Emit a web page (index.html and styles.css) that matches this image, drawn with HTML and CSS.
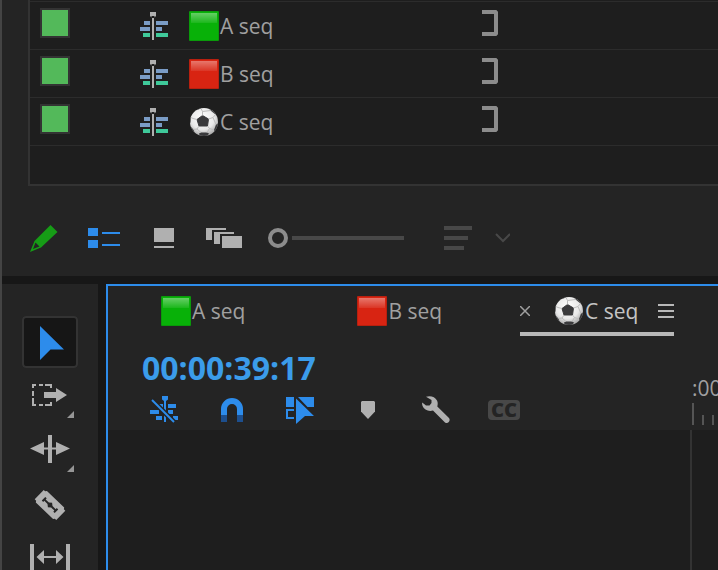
FILE: index.html
```html
<!DOCTYPE html>
<html lang="en">
<head>
    <meta charset="UTF-8">
    <meta name="viewport" content="width=device-width, initial-scale=1.0">
    <title>Sequences</title>
    <link rel="stylesheet" href="styles.css">
</head>
<body>
    <!-- shared icons -->
    <svg class="defs" width="0" height="0" aria-hidden="true">
        <defs>
            <linearGradient id="shine" x1="0" y1="0" x2="0" y2="1">
                <stop offset="0" stop-color="#fff" stop-opacity="0.38"/>
                <stop offset="1" stop-color="#fff" stop-opacity="0.08"/>
            </linearGradient>
            <radialGradient id="ballShade" cx="0.45" cy="0.35" r="0.65">
                <stop offset="0" stop-color="#fff"/>
                <stop offset="0.65" stop-color="#e8e8e8"/>
                <stop offset="1" stop-color="#a8a8a8"/>
            </radialGradient>
            <clipPath id="ballClip"><circle cx="15" cy="15" r="14"/></clipPath>
        </defs>
        <symbol id="green" viewBox="0 0 30 30">
            <rect width="30" height="30" rx="1" fill="#0a9a0a"/>
            <rect x="1" y="1" width="28" height="28" fill="#08b108"/>
            <rect x="2" y="2" width="26" height="10" fill="url(#shine)"/>
        </symbol>
        <symbol id="red" viewBox="0 0 30 30">
            <rect width="30" height="30" rx="1" fill="#b8200f"/>
            <rect x="1" y="1" width="28" height="28" fill="#d82412"/>
            <rect x="2" y="2" width="26" height="10" fill="url(#shine)"/>
        </symbol>
        <symbol id="ball" viewBox="0 0 30 30">
            <circle cx="15" cy="15" r="14" fill="url(#ballShade)"/>
            <g clip-path="url(#ballClip)">
                <path d="M13.500 8.500l6 3.500-1 7h-8.500L8 12.500z" fill="#3a3a3c" stroke="#3a3a3c" stroke-linejoin="round"/>
                <path d="M19 0l2.500 3.500L26.500 7.500 30 9V0zM30 16l-3 1.500-2 5.500 1.500 3L30 22zM10 26.500l2-1h6l2 1-2 3h-7zM0 9l2 1.500-.5 5L0 17zM2 20l2.500 2.500L6 27 2 26zM8 3l4-1.500V0H7z" fill="#3a3a3c"/>
                <path d="M13.500 8.500V4.500L12 1.500M13.500 4.500l8-1M19.500 12l4.500-1.500 2.500-3M18.500 19l2 2.500 4.500 1.500M20.500 21.500L18 25.500M10 19l-2 3 4 3.500M8 22l-3.500.5M8 12.500l-4-1-2-1M24 10.500l3 7" fill="none" stroke="#bcbcbc"/>
            </g>
        </symbol>
        <symbol id="seq" viewBox="0 0 28 28">
            <path d="M10 0h6v4l-1.500 1.500V4h-3v1.500L10 4z" fill="#b0b0b0"/>
            <path d="M12 6h2v22h-2z" fill="#b0b0b0"/>
            <path d="M4 9h6v4H4zM16 9h12v4H16zM0 15h10v4H0zM16 15h6v4h-6z" fill="#7a9cc6"/>
            <path d="M3 21h7v4H3zM16 21h12v4H16z" fill="#3fc99a"/>
        </symbol>
        <symbol id="bracket" viewBox="0 0 16 26">
            <path d="M0 2h13.500l.5.500v21l-.5.500H0" fill="none" stroke="#8c8c8c" stroke-width="4"/>
        </symbol>
    </svg>

    <div class="app">
        <section class="project">
            <table class="bin">
                <tbody>
                    <tr>
                        <td class="label"><span class="swatch"></span></td>
                        <td class="kind"><svg width="28" height="28"><use href="#seq"/></svg></td>
                        <td class="name"><span class="title"><svg width="30" height="30"><use href="#green"/></svg>A seq</span></td>
                        <td class="usage"><svg width="16" height="26"><use href="#bracket"/></svg></td>
                    </tr>
                    <tr>
                        <td class="label"><span class="swatch"></span></td>
                        <td class="kind"><svg width="28" height="28"><use href="#seq"/></svg></td>
                        <td class="name"><span class="title"><svg width="30" height="30"><use href="#red"/></svg>B seq</span></td>
                        <td class="usage"><svg width="16" height="26"><use href="#bracket"/></svg></td>
                    </tr>
                    <tr>
                        <td class="label"><span class="swatch"></span></td>
                        <td class="kind"><svg width="28" height="28"><use href="#seq"/></svg></td>
                        <td class="name"><span class="title"><svg width="30" height="30"><use href="#ball"/></svg>C seq</span></td>
                        <td class="usage"><svg width="16" height="26"><use href="#bracket"/></svg></td>
                    </tr>
                    <tr class="blank"><td colspan="4"></td></tr>
                </tbody>
            </table>

            <div class="toolbar">
                <button class="tool-button" aria-label="Write access">
                    <svg width="28" height="28" viewBox="0 0 28 28">
                        <path d="M20.500 1L27.500 8 11 23.500 0 28 4.500 17zM5.500 18.500L3 25l6.500-2.500z" fill="#169c16" fill-rule="evenodd"/>
                    </svg>
                </button>
                <button class="tool-button" aria-label="List view">
                    <svg width="32" height="20" viewBox="0 0 32 20" fill="#2d8ceb">
                        <path d="M0 0h10v8H0zM0 12h10v8H0zM14 4h18v2H14zM14 16h18v2H14z"/>
                    </svg>
                </button>
                <button class="tool-button" aria-label="Icon view">
                    <svg width="20" height="20" viewBox="0 0 20 20" fill="#b0b0b0">
                        <path d="M0 0h20v14H0zM0 18h20v2H0z"/>
                    </svg>
                </button>
                <button class="tool-button" aria-label="Freeform view">
                    <svg width="36" height="20" viewBox="0 0 36 20" fill="#b0b0b0">
                        <path d="M0 0h20v2H6v10H0zM8 4h20v2H14v10H8zM16 8h20v12H16z"/>
                    </svg>
                </button>
                <input class="zoom" type="range" min="0" max="100" value="0" aria-label="Zoom">
                <button class="sort" aria-label="Sort icons">
                    <svg width="66" height="24" viewBox="0 0 66 24" fill="#484848">
                        <path d="M0 0h28v4H0zM0 10h24v4H0zM0 20h20v4H0z"/>
                        <path d="M52 8l7 7 7-7" fill="none" stroke="#484848" stroke-width="2"/>
                    </svg>
                </button>
            </div>
        </section>

        <div class="workspace">
            <nav class="tools">
                <button class="tool selected" aria-label="Selection tool">
                    <svg width="56" height="52" viewBox="0 0 56 52">
                        <path d="M18 10l24 23.500H28.500L18 44z" fill="#2d8ceb"/>
                    </svg>
                </button>
                <button class="tool" aria-label="Track select tool">
                    <svg width="56" height="52" viewBox="0 0 56 52" fill="#b0b0b0">
                        <path d="M10 14h4v2h-2v2h-2zM17 14h4v2h-4zM23 14h7v4h-2v-2h-5zM10 21h2v5h-2zM10 28h2v5h-2zM10 32h2v2h2v2h-4zM17 34h4v2h-4zM23 34h5v-2h2v4h-7z"/>
                        <path d="M22 22h12v-4l11 7-11 7v-4H22z"/>
                        <path d="M52 41v7h-7z" fill="#969696"/>
                    </svg>
                </button>
                <button class="tool" aria-label="Ripple edit tool">
                    <svg width="56" height="52" viewBox="0 0 56 52" fill="#b0b0b0">
                        <path d="M26 11h4v28h-4zM8 24.500L22 18v5.500h4v2h-4V31zM48 24.500L34 18v5.500h-4v2h4V31z"/>
                        <path d="M52 41v7h-7z" fill="#969696"/>
                    </svg>
                </button>
                <button class="tool" aria-label="Razor tool">
                    <svg width="56" height="52" viewBox="0 0 56 52">
                        <g transform="rotate(44 28 27)">
                            <path d="M13 20.500h2l1-1.500h24l1 1.500h2v13h-2L40 35H16l-1-1.500h-2z" fill="#b0b0b0"/>
                            <path d="M19 24.500h2V26h4.500l2.500-2 2.500 2H35v-1.500h2v5h-2V28h-4.500L28 30l-2.500-2H21v1.500h-2z" fill="#242424"/>
                        </g>
                    </svg>
                </button>
                <button class="tool" aria-label="Slip tool">
                    <svg width="56" height="52" viewBox="0 0 56 52" fill="#b0b0b0">
                        <path d="M8 12h4v28H8zM44 12h4v28h-4zM14.500 25L22 18v6h12v-6l7.500 7-7.500 7v-6H22v6z"/>
                    </svg>
                </button>
            </nav>

            <section class="timeline">
                <div class="tabs">
                    <div class="tab"><button class="title"><svg width="30" height="30"><use href="#green"/></svg>A seq</button></div>
                    <div class="tab"><button class="title"><svg width="30" height="30"><use href="#red"/></svg>B seq</button></div>
                    <div class="tab active">
                        <button class="close" aria-label="Close">
                            <svg width="10" height="10" viewBox="0 0 10 10"><path d="M0 0l10 10M10 0L0 10" stroke="#a0a0a0" stroke-width="1.500"/></svg>
                        </button>
                        <button class="title"><svg width="30" height="30"><use href="#ball"/></svg>C seq</button>
                        <button class="menu" aria-label="Panel menu">
                            <svg width="16" height="14" viewBox="0 0 16 14"><path d="M0 1h16M0 7h16M0 13h16" stroke="#b8b8b8" stroke-width="2"/></svg>
                        </button>
                    </div>
                </div>

                <div class="head">
                    <div class="controls">
                        <div class="timecode">00:00:39:17</div>
                        <div class="switches">
                            <button class="switch" aria-label="Nest sequences">
                                <svg width="28" height="28" viewBox="0 0 28 28" fill="#2d8ceb">
                                    <path d="M12 0h6v3.500L16 5v21h-2V5l-2-1.500zM18 8h8v4h-8zM9 8h4v4H9zM0 14h9v4H0zM18 14h5v4h-5zM6 20h6v4H6zM23 20h5v4h-5z"/>
                                    <path d="M2 4l22 22" stroke="#242424" stroke-width="5"/>
                                    <path d="M2 4l22 22" stroke="#2d8ceb" stroke-width="2"/>
                                </svg>
                            </button>
                            <button class="switch" aria-label="Snap">
                                <svg width="22" height="24" viewBox="0 0 22 24" fill="#2d8ceb">
                                    <path d="M0 17v-6a11 11 0 0 1 22 0v6h-6v-6a5 5 0 0 0-10 0v6z"/>
                                    <path d="M0 17h6v7H0zM16 17h6v7h-6z" fill="#1d4f8e"/>
                                </svg>
                            </button>
                            <button class="switch" aria-label="Linked selection">
                                <svg width="28" height="28" viewBox="0 0 28 28" fill="#2d8ceb">
                                    <path d="M0 1h8v10H0zM12 1h16v10h-6.500zM0 13h8v2H2v6h6v2H0zM10 2.500L28 20h-9L10 28z"/>
                                </svg>
                            </button>
                            <button class="switch" aria-label="Add marker">
                                <svg width="14" height="18" viewBox="0 0 14 18"><path d="M1 0h12l1 1v9.500L7 18 0 10.500V1z" fill="#b0b0b0"/></svg>
                            </button>
                            <button class="switch" aria-label="Display settings">
                                <svg width="28" height="28" viewBox="0 0 28 28">
                                    <path d="M4 .8C8-.8 13 .5 15 4.500c1 2 .8 4 .3 6L27 22c2 2.500-1 6.500-4 4.500L11 14.500C6.500 16 2 13.500.6 10c-.5-1.500-.6-2.500-.4-3.500L4 9.500h3.500L9.500 7V4z" fill="#b0b0b0"/>
                                </svg>
                            </button>
                            <button class="switch" aria-label="Captions"><span class="cc">CC</span></button>
                        </div>
                    </div>
                    <div class="ruler">
                        <span class="time">:00:00</span>
                        <div class="ticks">
                            <i class="tick major"></i><i class="tick"></i><i class="tick"></i>
                        </div>
                    </div>
                </div>

                <div class="tracks">
                    <div class="track-heads"></div>
                    <div class="track-area"></div>
                </div>
            </section>
        </div>
    </div>
</body>
</html>
```
FILE: styles.css
```css
* {
    box-sizing: border-box;
}

body {
    margin: 0;
    background: #171717;
    color: #a0a0a0;
    font-family: "Open Sans", "Noto Sans", sans-serif;
    font-size: 21px;
    line-height: 30px;
}

button {
    padding: 0;
    border: 0;
    background: none;
    color: inherit;
    font: inherit;
    cursor: pointer;
}

svg {
    display: block;
}

.defs {
    position: absolute;
}

.app {
    display: flex;
    flex-direction: column;
    gap: 8px;
    height: 100vh;
    overflow: hidden;
    border-left: 2px solid #444;
}

/* project panel */
.project {
    flex: none;
    padding-left: 26px;
    background: #242424;
}

.bin {
    width: 100%;
    table-layout: fixed;
    border-collapse: separate;
    border-spacing: 0;
    padding-top: 1px;
    border-left: 2px solid #333;
    border-bottom: 2px solid #333;
    background: #1e1e1e;
}

.bin td {
    height: 48px;
    padding: 0;
    border-top: 1px solid #2c2c2c;
    vertical-align: middle;
}

.bin .blank td {
    height: 39px;
}

.bin .label {
    width: 110px;
    padding: 0 0 6px 10px;
}

.bin .kind {
    width: 49px;
}

.bin .name {
    width: 293px;
}

.bin .usage {
    padding-bottom: 6px;
}

.swatch {
    display: block;
    width: 30px;
    height: 30px;
    border: 2px solid #333;
    background: #53b95a;
}

.title {
    display: flex;
    align-items: center;
    gap: 1px;
    white-space: nowrap;
}

.toolbar {
    display: flex;
    align-items: center;
    height: 90px;
    padding-top: 14px;
    margin-left: -14px;
}

.tool-button {
    display: flex;
    justify-content: center;
    width: 60px;
}

.zoom {
    appearance: none;
    width: 136px;
    height: 20px;
    margin: 0 40px 0 14px;
    background: linear-gradient(#484848, #484848) 24px center / 112px 4px no-repeat;
}

.zoom::-webkit-slider-thumb {
    appearance: none;
    width: 20px;
    height: 20px;
    border: 4px solid #8c8c8c;
    border-radius: 50%;
    background: #242424;
}

/* lower half */
.workspace {
    display: flex;
    flex: 1;
    gap: 8px;
    min-height: 0;
}

.tools {
    display: flex;
    flex: none;
    flex-direction: column;
    align-items: center;
    gap: 2px;
    width: 96px;
    padding-top: 32px;
    overflow: hidden;
    background: #242424;
}

.tool {
    flex: none;
    border-radius: 4px;
}

.tool.selected {
    background: #161616;
    box-shadow: inset 0 0 0 2px #333;
}

.timeline {
    display: flex;
    flex: 1;
    flex-direction: column;
    min-width: 0;
    border: 2px solid #2d8ceb;
    border-right: 0;
    border-bottom: 0;
    background: #242424;
}

.tabs {
    display: flex;
    gap: 78px;
    padding-left: 19px;
}

.tab {
    display: flex;
    align-items: center;
    height: 50px;
    padding: 4px 0 0 34px;
    border-bottom: 4px solid transparent;
}

.tab.active {
    padding-left: 0;
    border-color: #b8b8b8;
    color: #c4c4c4;
}

.close {
    width: 34px;
}

.menu {
    margin-left: 20px;
}

.head {
    display: flex;
    height: 94px;
}

.controls,
.track-heads {
    flex: none;
    width: 582px;
}

.timecode {
    padding: 12px 0 0 34px;
    color: #3b9cea;
    font-size: 32px;
    font-weight: 700;
    line-height: 40px;
}

.switches {
    display: flex;
    padding-left: 22px;
}

.switch {
    display: flex;
    align-items: center;
    justify-content: center;
    width: 68px;
    height: 44px;
}

.cc {
    width: 32px;
    border-radius: 4px;
    background: #484848;
    color: #242424;
    font-size: 20px;
    font-weight: 800;
    line-height: 20px;
}

.ruler {
    flex: 1;
    min-width: 0;
    overflow: hidden;
    padding: 37px 0 0 2px;
}

.time {
    display: block;
    white-space: nowrap;
}

.ticks {
    display: flex;
    align-items: flex-end;
    gap: 8px;
    height: 22px;
}

.tick {
    width: 2px;
    height: 10px;
    background: #555;
}

.tick.major {
    height: 22px;
}

.tracks {
    display: flex;
    flex: 1;
    background: #1e1e1e;
}

.track-area {
    flex: 1;
    border-left: 2px solid #333;
}
```
